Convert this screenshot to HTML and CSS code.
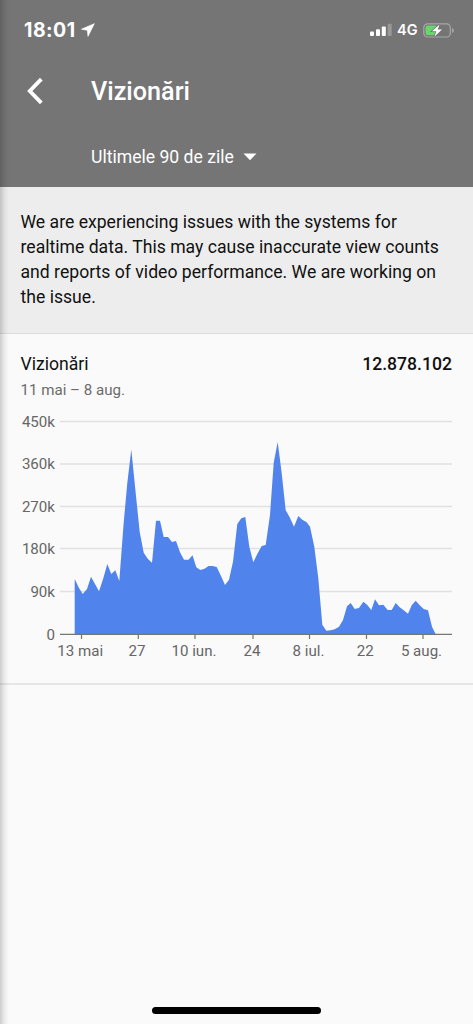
FILE: index.html
```html
<!DOCTYPE html>
<html lang="ro">
<head>
<meta charset="utf-8">
<meta name="viewport" content="width=device-width, initial-scale=1">
<title>Vizionări</title>
<link rel="stylesheet" href="styles.css">
</head>
<body>
<main class="screen">
  <header class="header">
    <div class="status">
      <span class="clock">18:01</span>
      <svg class="location" width="14" height="14" viewBox="0 0 14 14"><path d="M13.300.700.500 6.200l5.900 1.100.600 6z" fill="#fff" stroke="#fff" stroke-width=".7" stroke-linejoin="round"/></svg>
      <svg class="signal" width="22" height="14" viewBox="0 0 22 14">
        <g fill="#fff"><rect x="0" y="8.500" width="4" height="4.500" rx="1"/><rect x="6" y="6.300" width="4" height="6.700" rx="1"/><rect x="11.800" y="3.400" width="4" height="9.600" rx="1"/></g>
        <rect x="17.700" y="0.700" width="4" height="12.300" rx="1" fill="#999"/>
      </svg>
      <span class="network">4G</span>
      <svg class="battery" width="32" height="15" viewBox="0 0 32 15">
        <rect x=".8" y=".8" width="26.500" height="13.200" rx="3.800" fill="none" stroke="#a8a8a8" stroke-width="1.200"/>
        <path d="M29 5v5c1.200-.5 1.800-1.300 1.800-2.500S30.200 5.500 29 5z" fill="#a8a8a8"/>
        <path d="M4.700 2.500H13v9.800H4.700q-2.200 0-2.200-2.200V4.700q0-2.200 2.200-2.200z" fill="#69d56c"/>
        <path d="M16.500 1.500 9 8.300h4.300L11.500 13.500 19 6.600h-4.300z" fill="#fff" stroke="#757575" stroke-width="1.600" paint-order="stroke"/>
      </svg>
    </div>
    <div class="titlebar">
      <svg class="back" width="18" height="28" viewBox="0 0 18 28"><path d="M15.300 2.200 3.800 14l11.500 11.800" fill="none" stroke="#fff" stroke-width="3.800"/></svg>
      <h1 class="title">Vizionări</h1>
    </div>
    <div class="period">
      <span class="period-label">Ultimele 90 de zile</span>
      <svg class="caret" width="14" height="8" viewBox="0 0 14 8"><path d="M.5.500h13L7 7.300z" fill="#fff"/></svg>
    </div>
  </header>
  <p class="notice">We are experiencing issues with the systems for<br>realtime data. This may cause inaccurate view counts<br>and reports of video performance. We are working on<br>the issue.</p>
  <section class="card">
    <div class="metric"><span class="metric-name">Vizionări</span><span class="metric-value">12.878.102</span></div>
    <div class="range">11 mai – 8 aug.</div>
    <svg class="chart" width="473" height="270" viewBox="0 400 473 270">
      <g class="grid"><path d="M60 421.500H452M60 464H452M60 506.500H452M60 548.500H452M60 591.500H452"/></g>
      <path class="area" d="M74.700 634.300V579L78.700 587.500 82.700 594 87 589 91 576.700 95 584 99 591.300 103.300 578.300 107.300 564 111.300 574 115.300 570.300 119.300 581 123.500 525 127.300 483 131.300 449.500 135.700 493 139.700 532 143.700 552.700 147.700 558.700 152 562.700 156 520.700 160 520.700 163.700 537 168 537 172 542 176 541 180 552.300 184 559.700 188.500 559.700 192.500 555.300 196.300 567.300 200.300 570 204.500 568.700 208.500 566 212.500 566 216.700 567 221 576 225 585 229 579.700 233 561.700 237.300 524 241.300 518.300 245.300 517 249.300 546.700 253.300 562.300 257.300 554 261.700 546 265.700 545 270 515 273.700 462.700 277.700 442 281.700 473.300 285.700 510.300 289.700 517.300 294 526.700 298.300 516 302.300 519.700 306.700 522.300 310 526.700 314.300 546.700 318.300 578.300 322.300 624.700 326.300 630.700 330.700 630.300 334.700 629.300 339 626.700 343 620 347 606.300 350.700 603 354.700 609 359 608 363.300 601.700 367.300 605 371.300 610 375 599.300 379 605.300 383.300 604.700 387.700 610 391.700 610 395.700 603 399.700 607.300 403.700 610.300 408 613.700 411.700 605.300 415.700 600.700 419.700 605.300 423.700 609 428 610.300 432 626.700 435.700 634.300z"/>
      <path class="axis" d="M60 634.300H452M81.500 634v5M138.300 634v5M195 634v5M253 634v5M309.500 634v5M366.500 634v5M423 634v5"/>
      <g class="label y"><text x="55" y="426.700">450k</text><text x="55" y="469.400">360k</text><text x="55" y="512">270k</text><text x="55" y="554">180k</text><text x="55" y="597">90k</text><text x="55" y="639.700">0</text></g>
      <g class="label x"><text x="80.200" y="656">13 mai</text><text x="137" y="656">27</text><text x="194" y="656">10 iun.</text><text x="252" y="656">24</text><text x="308.500" y="656">8 iul.</text><text x="365.300" y="656">22</text><text x="421.500" y="656">5 aug.</text></g>
    </svg>
  </section>
  <div class="home-indicator"></div>
  <div class="edge-shadow"></div>
</main>
</body>
</html>
```
FILE: styles.css
```css
* { box-sizing: border-box; }
body { margin: 0; font-family: Roboto, "Liberation Sans", sans-serif; background: #fafafa; }
.screen { position: relative; display: flex; flex-direction: column; width: 473px; height: 1024px; overflow: hidden; background: #fafafa; color: #111; }
.header { height: 187px; background: #757575; color: #fff; }
.status { display: flex; align-items: center; height: 60px; padding: 0 18px 0 24px; }
.clock { width: 54px; font: 700 19.5px/24px Inter, sans-serif; letter-spacing: .5px; white-space: nowrap; }
.location { margin-left: 3px; }
.signal { margin-left: auto; }
.network { margin-left: 5px; width: 22px; font: 600 14.5px/20px Inter, sans-serif; }
.battery { margin-left: 4px; }
.titlebar { display: flex; align-items: center; height: 62px; padding-left: 26px; }
.title { margin: 2px 0 0 47px; font-size: 25.2px; line-height: 30px; font-weight: 500; }
.period { display: flex; align-items: center; gap: 9px; height: 69px; padding: 1px 0 0 91px; }
.period-label { font-size: 17.6px; line-height: 22px; }
.notice { height: 147px; margin: 0; padding: 22.5px 20.5px; background: #ededed; border-bottom: 1px solid #dcdcdc; font-size: 17.62px; line-height: 25.2px; white-space: nowrap; }
.card { height: 351px; border-bottom: 2px solid #e6e6e6; }
.metric { display: flex; justify-content: space-between; padding: 18px 21px 0 20.5px; font-size: 17.62px; line-height: 25px; }
.metric-value { font-weight: 500; }
.range { padding: 3px 20.5px 0; height: 23px; font-size: 15.1px; line-height: 20px; color: #6b6b6b; }
.chart { display: block; }
.grid { fill: none; stroke: #e1e1e1; stroke-width: 1.3; }
.area { fill: #5083ec; }
.axis { fill: none; stroke: #757575; stroke-width: 1.2; }
.label { font-size: 15.1px; fill: #666; }
.y { text-anchor: end; }
.x { text-anchor: middle; }
.home-indicator { width: 169px; height: 7px; margin: auto auto 10px; border-radius: 4px; background: #000; }
.edge-shadow { position: absolute; left: 0; top: 0; width: 9px; height: 100%; background: linear-gradient(90deg, rgba(0,0,0,.18), rgba(0,0,0,.06) 50%, transparent); }
```
